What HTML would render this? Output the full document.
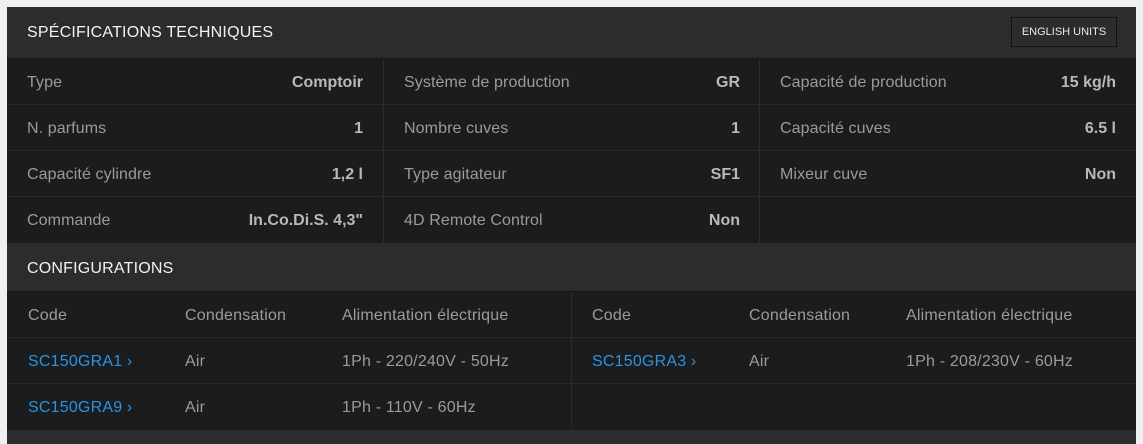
<!DOCTYPE html>
<html><head><meta charset="utf-8"><style>
*{margin:0;padding:0;box-sizing:border-box}
body{width:1143px;height:444px;background:#eeeff1;font-family:"Liberation Sans",sans-serif;overflow:hidden;position:relative}
.p{position:absolute;left:7px;top:7px;width:1129px;height:437px;background:#1b1c1e}
.h{position:absolute;left:0;width:1129px;background:#2b2c2e;color:#f2f2f2;font-size:16px;padding-left:20px;border-bottom:1px solid #151617;letter-spacing:0.2px}
.btn{position:absolute;left:1004px;top:10px;width:106px;height:30px;border:1px solid #111;color:#e8e8e8;font-size:11px;text-align:center;line-height:28px;letter-spacing:0}
.c{position:absolute;height:46px;border-bottom:1px solid #28292b;color:#9a9b9d;font-size:16px;line-height:47px;padding:0 20px;letter-spacing:0.1px}
.c b{position:absolute;right:20px;top:0;color:#b8b9bb;font-weight:bold;letter-spacing:0}
.v{position:absolute;top:0;width:1px;background:#2a2b2d}
a{color:#2a94e0;text-decoration:none}
.t{position:absolute;color:#9a9b9d;font-size:16px;line-height:47px;letter-spacing:0.2px}
</style></head><body>
<div class="p">
<div class="h" style="top:0;height:52px;line-height:52px">SPÉCIFICATIONS TECHNIQUES<div class="btn">ENGLISH UNITS</div></div>
<div style="position:absolute;top:52px;left:0;width:1129px;height:184px">
<div class="c" style="top:0;left:0;width:376px">Type<b>Comptoir</b></div>
<div class="c" style="top:46px;left:0;width:376px">N. parfums<b>1</b></div>
<div class="c" style="top:92px;left:0;width:376px">Capacité cylindre<b>1,2 l</b></div>
<div class="c" style="top:138px;left:0;width:376px;border:0">Commande<b>In.Co.Di.S. 4,3"</b></div>
<div class="c" style="top:0;left:377px;width:376px">Système de production<b>GR</b></div>
<div class="c" style="top:46px;left:377px;width:376px">Nombre cuves<b>1</b></div>
<div class="c" style="top:92px;left:377px;width:376px">Type agitateur<b>SF1</b></div>
<div class="c" style="top:138px;left:377px;width:376px;border:0">4D Remote Control<b>Non</b></div>
<div class="c" style="top:0;left:753px;width:376px">Capacité de production<b>15 kg/h</b></div>
<div class="c" style="top:46px;left:753px;width:376px">Capacité cuves<b>6.5 l</b></div>
<div class="c" style="top:92px;left:753px;width:376px">Mixeur cuve<b>Non</b></div>
<div class="v" style="left:376px;height:184px"></div>
<div class="v" style="left:752px;height:184px"></div>
</div>
<div class="h" style="top:236px;height:49px;line-height:51px">CONFIGURATIONS</div>
<div style="position:absolute;top:285px;left:0;width:1129px;height:138px">
<div class="c" style="top:0;left:0;width:1129px"></div>
<div class="c" style="top:46px;left:0;width:1129px"></div>
<div class="c" style="top:92px;left:0;width:1129px;border:0"></div>
<div class="v" style="left:564px;height:138px"></div>
<div class="t" style="top:0;left:21px">Code</div><div class="t" style="top:0;left:178px">Condensation</div><div class="t" style="top:0;left:335px">Alimentation électrique</div>
<div class="t" style="top:0;left:585px">Code</div><div class="t" style="top:0;left:742px">Condensation</div><div class="t" style="top:0;left:899px">Alimentation électrique</div>
<div class="t" style="top:46px;left:21px"><a>SC150GRA1 ›</a></div><div class="t" style="top:46px;left:178px">Air</div><div class="t" style="top:46px;left:335px">1Ph - 220/240V - 50Hz</div>
<div class="t" style="top:46px;left:585px"><a>SC150GRA3 ›</a></div><div class="t" style="top:46px;left:742px">Air</div><div class="t" style="top:46px;left:899px">1Ph - 208/230V - 60Hz</div>
<div class="t" style="top:92px;left:21px"><a>SC150GRA9 ›</a></div><div class="t" style="top:92px;left:178px">Air</div><div class="t" style="top:92px;left:335px">1Ph - 110V - 60Hz</div>
</div>
<div style="position:absolute;top:423px;left:0;width:1129px;height:14px;background:#2b2c2e"></div>
</div>
</body></html>
